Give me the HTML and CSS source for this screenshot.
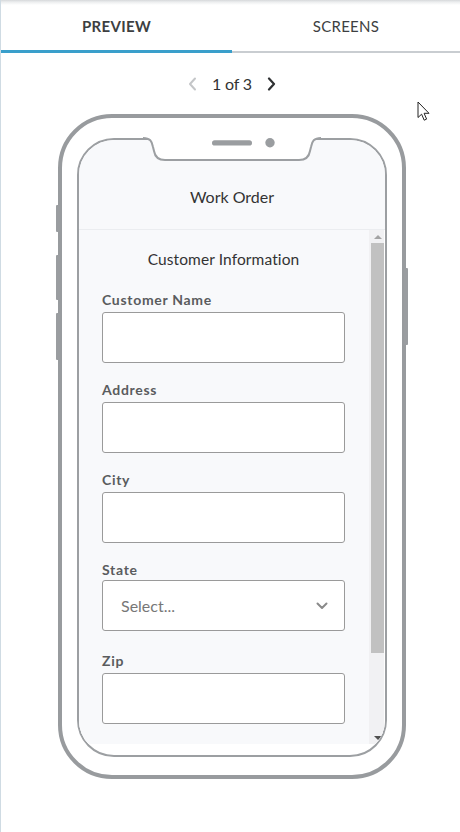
FILE: index.html
```html
<!DOCTYPE html>
<html lang="en">
<head>
<meta charset="utf-8">
<title>Preview</title>
<link rel="stylesheet" href="styles.css">
</head>
<body>
<div class="app">
  <nav class="tabs">
    <div class="tab tab-preview active">PREVIEW</div>
    <div class="tab tab-screens">SCREENS</div>
  </nav>

  <div class="pager">
    <svg class="chev chev-prev" width="9" height="14" viewBox="0 0 9 14"><polyline points="7,1.5 2,7 7,12.5" fill="none" stroke="#c4c6c8" stroke-width="2" stroke-linecap="round" stroke-linejoin="round"/></svg>
    <span class="pager-text">1 of 3</span>
    <svg class="chev chev-next" width="9" height="14" viewBox="0 0 9 14"><polyline points="2,1.5 7,7 2,12.5" fill="none" stroke="#2f3133" stroke-width="2.2" stroke-linecap="round" stroke-linejoin="round"/></svg>
  </div>

  <div class="phone">
    <span class="side-btn side-l1"></span>
    <span class="side-btn side-l2"></span>
    <span class="side-btn side-l3"></span>
    <span class="side-btn side-r1"></span>

    <svg class="notch" width="178" height="26" viewBox="0 0 178 26">
      <path d="M-1,-1 L-1,1 L0,1 C7,1 9,4 10,10 L11,14 C12,20 15,23 22,23 L156,23 C163,23 166,20 167,14 L168,10 C169,4 171,1 178,1 L179,1 L179,-1 Z" fill="#fff"/>
      <path d="M0,1 C7,1 9,4 10,10 L11,14 C12,20 15,23 22,23 L156,23 C163,23 166,20 167,14 L168,10 C169,4 171,1 178,1" fill="none" stroke="#9c9fa2" stroke-width="2"/>
      <rect x="69" y="3.2" width="40" height="5.4" rx="2.7" fill="#9a9da0"/>
      <circle cx="127" cy="5.8" r="4.7" fill="#9a9da0"/>
    </svg>

    <div class="screen">
      <header class="screen-head">Work Order</header>
      <div class="screen-body">
        <div class="form">
          <h2 class="form-title">Customer Information</h2>
          <div class="field">
            <label class="field-label">Customer Name</label>
            <div class="input"></div>
          </div>
          <div class="field">
            <label class="field-label">Address</label>
            <div class="input"></div>
          </div>
          <div class="field">
            <label class="field-label">City</label>
            <div class="input"></div>
          </div>
          <div class="field field-select">
            <label class="field-label">State</label>
            <div class="input select">
              <span class="select-text">Select...</span>
              <svg class="select-chev" width="12" height="8" viewBox="0 0 12 8"><polyline points="1.5,1.5 6,6 10.5,1.5" fill="none" stroke="#8a8a8a" stroke-width="2" stroke-linecap="round" stroke-linejoin="round"/></svg>
            </div>
          </div>
          <div class="field">
            <label class="field-label">Zip</label>
            <div class="input"></div>
          </div>
        </div>
        <div class="scrollbar">
          <div class="sb-btn"><span class="tri-up"></span></div>
          <div class="sb-thumb"></div>
          <div class="sb-fill"></div>
          <div class="sb-btn"><span class="tri-down"></span></div>
        </div>
      </div>
    </div>
  </div>

  <svg class="cursor" width="14" height="21" viewBox="0 0 14 21">
    <path d="M1,1 L1,16.5 L4.6,13.2 L7.2,19.2 L9.6,18.1 L7.1,12.3 L12,12.3 Z" fill="#fff" stroke="#222" stroke-width="1" stroke-linejoin="round"/>
  </svg>
</div>
</body>
</html>
```

FILE: styles.css
```css
* { box-sizing: border-box; margin: 0; padding: 0; }

body {
  background: #fff;
  font-family: Lato, "Open Sans", "Liberation Sans", sans-serif;
  color: #333;
}

.app {
  position: relative;
  height: 832px;
  border-left: 1px solid #cfdbe3;
  overflow: hidden;
}

/* Tabs */
.tabs {
  display: flex;
  height: 53px;
  background: linear-gradient(#d6d8da 0, #eceeef 2px, #fff 5px);
}
.tab {
  display: flex;
  align-items: center;
  justify-content: center;
  font-size: 15px;
  color: #3d3f41;
  letter-spacing: 0.3px;
}
.tab-preview {
  width: 231px;
  flex: none;
  padding-top: 2px;
  font-weight: 700;
  border-bottom: 3px solid #3a9fcb;
}
.tab-screens {
  flex: 1;
  padding-top: 1px;
  border-bottom: 2px solid #c9cdd1;
}

/* Pager */
.pager {
  display: flex;
  align-items: center;
  justify-content: center;
  gap: 15px;
  padding: 21px 0 20px 3px;
}
.pager-text {
  font-size: 16px;
  line-height: 20px;
  color: #333;
  letter-spacing: -0.2px;
}
.chev { display: block; }

/* Phone */
.phone {
  position: relative;
  margin-left: 57px;
  width: 348px;
  height: 665px;
  border: 4px solid #989b9e;
  border-radius: 54px;
  padding: 20px 15px 18px;
  display: flex;
  flex-direction: column;
  background: #fff;
}
.side-btn {
  position: absolute;
  width: 4px;
  background: #9a9da0;
  border-radius: 1px;
}
.side-l1 { left: -6px; top: 87px; height: 27px; }
.side-l2 { left: -6px; top: 137px; height: 45px; }
.side-l3 { left: -6px; top: 195px; height: 47px; }
.side-r1 { right: -6px; top: 150px; height: 77px; }

.notch {
  position: absolute;
  left: 81px;
  top: 19px;
  overflow: visible;
  z-index: 2;
}

.screen {
  flex: 1;
  display: flex;
  flex-direction: column;
  border: 2px solid #9c9fa2;
  border-radius: 37px;
  overflow: hidden;
  background: #fff;
}
.screen-head {
  height: 90px;
  flex: none;
  padding-top: 47px;
  text-align: center;
  font-size: 16px;
  line-height: 20px;
  color: #333;
  background: #f8f9fb;
  border-bottom: 1px solid #ebedf0;
}
.screen-body {
  height: 514px;
  flex: none;
  display: flex;
  background: #fff;
}

/* Form */
.form {
  flex: 1;
  background: #f8f9fb;
  padding: 19px 0 0 23px;
  overflow: hidden;
}
.form-title {
  width: 243px;
  font-size: 15.5px;
  font-weight: 400;
  line-height: 20px;
  text-align: center;
  color: #333;
  margin-bottom: 23px;
  letter-spacing: 0.1px;
}
.field { margin-bottom: 19px; }
.field-label {
  display: block;
  font-size: 14px;
  font-weight: 700;
  line-height: 16px;
  color: #5a5c5e;
  letter-spacing: 0.7px;
  margin-bottom: 4px;
}
.input {
  width: 243px;
  height: 51px;
  background: #fff;
  border: 1px solid #9a9a9a;
  border-radius: 3px;
}
.field-select { margin-bottom: 22px; }
.field-select .field-label { margin-bottom: 2px; }
.select {
  display: flex;
  align-items: center;
  justify-content: space-between;
  padding: 0 16px 0 18px;
}
.select-text {
  font-size: 16px;
  color: #777;
}
.select-chev { display: block; }

/* Scrollbar */
.scrollbar {
  width: 15px;
  flex: none;
  margin-right: 1px;
  background: #f1f1f3;
  display: flex;
  flex-direction: column;
  padding-left: 2px;
}
.sb-btn {
  height: 13px;
  display: flex;
  align-items: center;
  justify-content: center;
  flex: none;
}
.tri-up {
  width: 0; height: 0;
  border-left: 4px solid transparent;
  border-right: 4px solid transparent;
  border-bottom: 4px solid #a3a3a3;
}
.tri-down {
  width: 0; height: 0;
  border-left: 4px solid transparent;
  border-right: 4px solid transparent;
  border-top: 4px solid #505050;
}
.sb-thumb {
  height: 410px;
  flex: none;
  background: #c1c1c1;
}
.sb-fill { flex: 1; }

/* Cursor overlay */
.cursor {
  position: absolute;
  left: 416px;
  top: 101px;
}
```
